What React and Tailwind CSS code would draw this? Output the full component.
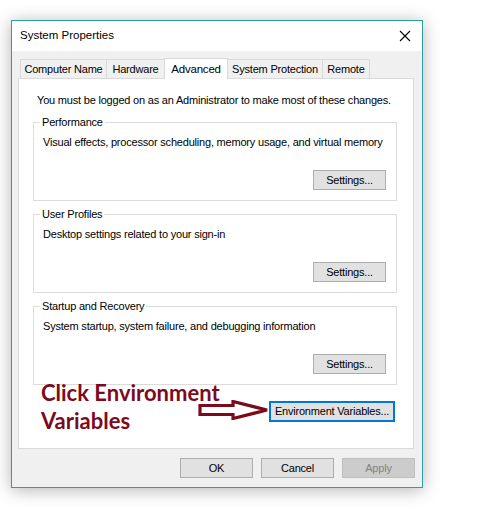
import React from "react";

const font = { fontFamily: '"Liberation Sans", Arial, sans-serif' };

const Btn = ({ children, disabled = false, className = "" }) => (
  <div
    className={`flex h-[20px] w-[73px] items-center justify-center whitespace-nowrap border text-[11px] ${
      disabled
        ? "border-[#bfbfbf] bg-[#cccccc] text-[#838383]"
        : "border-[#adadad] bg-[#e1e1e1] text-black"
    } ${className}`}
  >
    {children}
  </div>
);

const Group = ({ title, desc }) => (
  <div className="relative ml-[14px] mr-[16px] h-[79px] border border-[#dcdcdc]">
    <span className="absolute left-[6px] top-[-8px] bg-white px-[2px] text-[11px] leading-[14px]">
      {title}
    </span>
    <div className="flex h-full flex-col justify-between pb-[10px] pl-[9px] pr-[10px] pt-[11px]">
      <div className="whitespace-nowrap text-[11px] leading-[16px]">{desc}</div>
      <div className="flex justify-end">
        <Btn className="w-[72px]">Settings...</Btn>
      </div>
    </div>
  </div>
);

const App = () => {
  const tabs = [
    { label: "Computer Name", w: "w-[87px]" },
    { label: "Hardware", w: "w-[58px]" },
    { label: "Advanced", w: "w-[64px]" },
    { label: "System Protection", w: "w-[95px]" },
    { label: "Remote", w: "w-[47px]" },
  ];

  return (
    <div className="min-h-[516px] w-[497px] bg-white pl-[11px] pt-[20px] tracking-[-0.2px]" style={font}>
      <div className="flex h-[468px] w-[412px] flex-col border border-[#2a9ea3] bg-[#f0f0f0] text-black shadow-[0_2px_16px_rgba(0,0,0,0.3)]">
        {/* Title bar */}
        <div className="flex h-[30px] items-center justify-between bg-white pl-[8px] pr-[10px]">
          <span className="text-[11.5px] tracking-normal">System Properties</span>
          <svg width="12" height="12" viewBox="0 0 12 12" className="mr-[1px]">
            <path d="M1 1 L11 11 M11 1 L1 11" stroke="#000" strokeWidth="1.1" fill="none" />
          </svg>
        </div>

        {/* Tabs */}
        <div className="flex h-[27px] items-end pl-[8px]">
          {tabs.map((t) => {
            const active = t.label === "Advanced";
            return (
              <div
                key={t.label}
                className={
                  active
                    ? `relative z-10 -mb-px -ml-px flex h-[21px] items-start justify-center whitespace-nowrap border border-b-0 border-[#d9d9d9] bg-white pt-[2px] text-[11.5px] ${t.w}`
                    : `flex h-[19px] items-center justify-center whitespace-nowrap border border-b-0 border-l-0 border-[#d9d9d9] bg-[#f0f0f0] text-[11px] first:border-l ${t.w}`
                }
              >
                {t.label}
              </div>
            );
          })}
        </div>

        {/* Panel */}
        <div className="relative ml-[6px] h-[371px] w-[396px] border border-[#d9d9d9] bg-white">
          <div className="whitespace-nowrap pl-[18px] pt-[13px] text-[11px] leading-[16px]">
            You must be logged on as an Administrator to make most of these changes.
          </div>
          <div className="mt-[14px] flex flex-col gap-[13px]">
            <Group
              title="Performance"
              desc="Visual effects, processor scheduling, memory usage, and virtual memory"
            />
            <Group title="User Profiles" desc="Desktop settings related to your sign-in" />
            <Group
              title="Startup and Recovery"
              desc="System startup, system failure, and debugging information"
            />
          </div>
          <div className="mt-[16px] flex justify-end pr-[18px]">
            <div className="flex h-[21px] w-[126px] items-center justify-center whitespace-nowrap border-2 border-[#0078d7] bg-[#e1e1e1] text-[11px]">
              Environment Variables...
            </div>
          </div>

          {/* Annotation overlay */}
          <div
            className="absolute left-[22px] top-[300px] whitespace-nowrap text-[22px] font-bold leading-[28px] tracking-normal text-[#7d0a1c]"
            style={{ fontFamily: 'Lato, "Open Sans", sans-serif' }}
          >
            Click Environment
            <br />
            Variables
          </div>
          <svg
            className="absolute left-[179px] top-[321px]"
            width="72"
            height="20"
            viewBox="0 0 72 20"
          >
            <polygon
              points="2,5.5 35,5.5 35,1.5 69,10 35,18.5 35,14.5 2,14.5"
              fill="#fff"
              stroke="#7d0a1c"
              strokeWidth="3.2"
              strokeLinejoin="miter"
            />
          </svg>
        </div>

        {/* Bottom buttons */}
        <div className="mt-[9px] flex justify-end gap-[8px] pr-[7px]">
          <Btn>OK</Btn>
          <Btn>Cancel</Btn>
          <Btn disabled>Apply</Btn>
        </div>
      </div>
    </div>
  );
};

export default App;
